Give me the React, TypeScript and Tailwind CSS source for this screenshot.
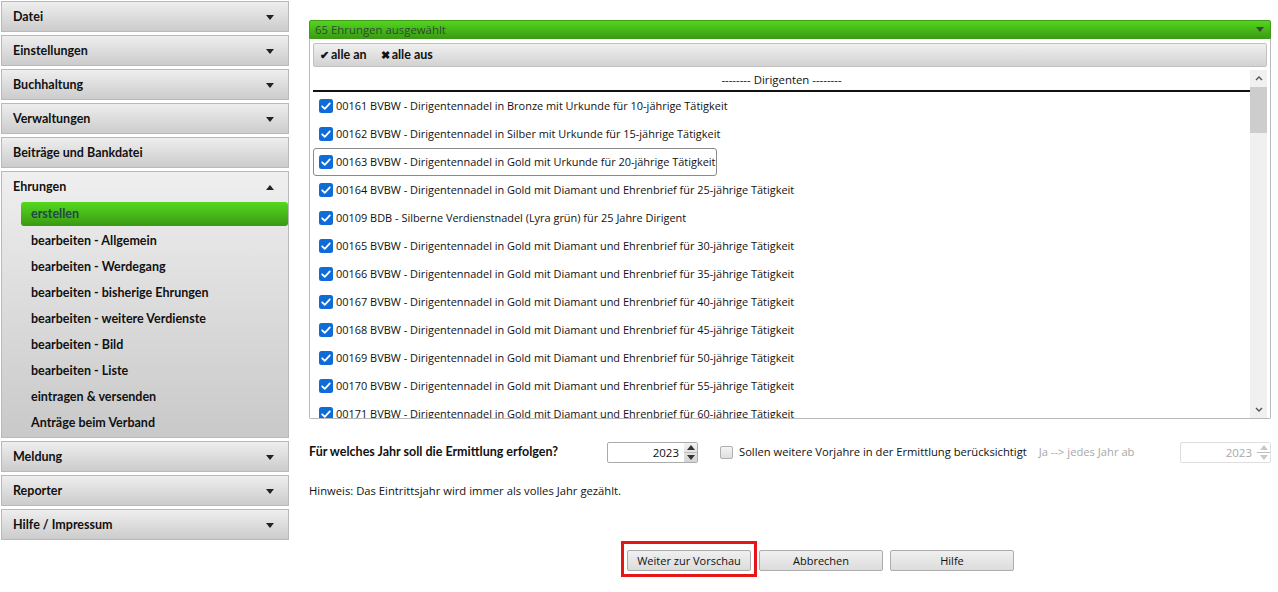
import React from 'react';

const sideFont = { fontFamily: 'Lato, "Noto Sans", sans-serif' };
const uiFont = { fontFamily: '"Open Sans", "Noto Sans", sans-serif' };

const Caret = ({ up = false, className = '' }: { up?: boolean; className?: string }) => (
  <svg viewBox="0 0 8 5" className={`w-[8px] h-[5px] ${className}`}>
    {up ? <path d="M0 5L4 0L8 5Z" fill="currentColor" /> : <path d="M0 0L8 0L4 5Z" fill="currentColor" />}
  </svg>
);

const BlueCheck = () => (
  <svg viewBox="0 0 14 14" className="w-[14px] h-[14px] shrink-0">
    <rect x="0" y="0" width="14" height="14" rx="2.5" fill="#0f6cd6" />
    <path d="M3.2 7.3L5.8 9.8L10.8 4.4" fill="none" stroke="#fff" strokeWidth="1.8" strokeLinecap="round" strokeLinejoin="round" />
  </svg>
);

const menu = ['Datei', 'Einstellungen', 'Buchhaltung', 'Verwaltungen', 'Beiträge und Bankdatei'];
const menuAfter = ['Meldung', 'Reporter', 'Hilfe / Impressum'];
const subItems = [
  'bearbeiten - Allgemein',
  'bearbeiten - Werdegang',
  'bearbeiten - bisherige Ehrungen',
  'bearbeiten - weitere Verdienste',
  'bearbeiten - Bild',
  'bearbeiten - Liste',
  'eintragen & versenden',
  'Anträge beim Verband',
];

const rows = [
  '00161 BVBW - Dirigentennadel in Bronze mit Urkunde für 10-jährige Tätigkeit',
  '00162 BVBW - Dirigentennadel in Silber mit Urkunde für 15-jährige Tätigkeit',
  '00163 BVBW - Dirigentennadel in Gold mit Urkunde für 20-jährige Tätigkeit',
  '00164 BVBW - Dirigentennadel in Gold mit Diamant und Ehrenbrief für 25-jährige Tätigkeit',
  '00109 BDB - Silberne Verdienstnadel (Lyra grün) für 25 Jahre Dirigent',
  '00165 BVBW - Dirigentennadel in Gold mit Diamant und Ehrenbrief für 30-jährige Tätigkeit',
  '00166 BVBW - Dirigentennadel in Gold mit Diamant und Ehrenbrief für 35-jährige Tätigkeit',
  '00167 BVBW - Dirigentennadel in Gold mit Diamant und Ehrenbrief für 40-jährige Tätigkeit',
  '00168 BVBW - Dirigentennadel in Gold mit Diamant und Ehrenbrief für 45-jährige Tätigkeit',
  '00169 BVBW - Dirigentennadel in Gold mit Diamant und Ehrenbrief für 50-jährige Tätigkeit',
  '00170 BVBW - Dirigentennadel in Gold mit Diamant und Ehrenbrief für 55-jährige Tätigkeit',
  '00171 BVBW - Dirigentennadel in Gold mit Diamant und Ehrenbrief für 60-jährige Tätigkeit',
];

const MenuHeader = ({ label, caret = true }: { label: string; caret?: boolean }) => (
  <div className="h-[31px] flex items-center justify-between pl-[11px] pr-[14px] pt-[1px] border border-[#b9b9b9] bg-gradient-to-b from-[#eeeeee] to-[#cccccc] text-[12.5px] font-bold text-[#111]">
    <span>{label}</span>
    {caret && <Caret className="text-[#222]" />}
  </div>
);

const Spinner = ({ disabled = false }: { disabled?: boolean }) => (
  <div className={`w-[91px] h-[21px] flex items-stretch border rounded-[2px] ${disabled ? 'border-[#dedede]' : 'border-[#ababab]'} bg-white`}>
    <div className={`flex-1 flex items-center justify-end pr-[5px] text-[11.5px] ${disabled ? 'text-[#a8a8a8]' : 'text-[#111]'}`}>2023</div>
    <div className={`w-[13px] flex flex-col ${disabled ? 'text-[#c8c8c8] bg-white' : 'text-[#333] bg-gradient-to-b from-[#f2f2f2] to-[#d4d4d4]'}`}>
      <div className="flex-1 flex items-center justify-center"><Caret up className="w-[7px] h-[4px]" /></div>
      <div className="h-px bg-[#bdbdbd]" />
      <div className="flex-1 flex items-center justify-center"><Caret className="w-[7px] h-[4px]" /></div>
    </div>
  </div>
);

const Btn = ({ label }: { label: string }) => (
  <button className="w-[124px] h-[21px] border border-[#acacac] rounded-[2px] bg-gradient-to-b from-[#f0f0f0] to-[#dcdcdc] text-[11px] text-[#111] leading-none">
    {label}
  </button>
);

export default function App() {
  return (
    <div className="w-[1278px] h-[592px] bg-white flex overflow-hidden" style={uiFont}>
      {/* Sidebar */}
      <div className="w-[288px] ml-[1px] mt-[1px] flex flex-col gap-[3px]" style={sideFont}>
        {menu.map((m) => (
          <MenuHeader key={m} label={m} caret={m !== 'Beiträge und Bankdatei'} />
        ))}
        <div className="border border-[#b9b9b9] bg-gradient-to-b from-[#efefef] to-[#c9c9c9] pb-[1px]">
          <div className="h-[30px] flex items-center justify-between pl-[11px] pr-[14px] pt-[1px] text-[12.5px] font-bold text-[#111]">
            <span>Ehrungen</span>
            <Caret up className="text-[#222]" />
          </div>
          <div className="ml-[19px] h-[24px] flex items-center pl-[10px] rounded-[3px] bg-gradient-to-b from-[#56d81f] to-[#3a9a13] text-[12.5px] font-bold text-[#1f4a45]">
            erstellen
          </div>
          <div className="flex flex-col pt-[2px]">
            {subItems.map((s) => (
              <div key={s} className="h-[26px] flex items-center pl-[29px] pt-[1px] text-[12.5px] font-bold text-[#111]">
                {s}
              </div>
            ))}
          </div>
        </div>
        {menuAfter.map((m) => (
          <MenuHeader key={m} label={m} />
        ))}
      </div>

      {/* Main */}
      <div className="ml-[20px] w-[962px] pt-[20px] flex flex-col">
        <div className="h-[19px] flex items-center justify-between pl-[5px] pr-[6px] border border-[#3f9a1a] rounded-t-[2px] bg-gradient-to-b from-[#52d61c] to-[#3b9d14] text-[11.4px] text-[#2d4a33]">
          <span>65 Ehrungen ausgewählt</span>
          <Caret className="text-[#3b4b3b]" />
        </div>
        <div className="h-[380px] border border-t-0 border-[#b9b9b9] rounded-b-[2px] px-[3px] pt-[4px] flex flex-col">
          <div className="h-[24px] flex items-center gap-[14px] px-[6px] border border-[#c0c0c0] rounded-[2px] bg-gradient-to-b from-[#f0f0f0] to-[#d2d2d2] text-[12.5px] font-bold text-[#111]" style={sideFont}>
            <span className="flex items-center gap-[2px]"><span className="text-[11px]">✔</span>alle an</span>
            <span className="flex items-center gap-[2px]"><span className="text-[11px]">✖</span>alle aus</span>
          </div>
          <div className="mt-[3px] flex-1 flex overflow-hidden">
            <div className="flex-1 flex flex-col overflow-hidden">
              <div className="h-[22px] shrink-0 flex items-center justify-center border-b-[2px] border-[#111] text-[11.4px] text-[#111]">
                -------- Dirigenten --------
              </div>
              {rows.map((r, i) => (
                <div key={r} className="h-[28px] shrink-0 flex items-center">
                  <div className={`h-[28px] flex items-center gap-[3px] pl-[5px] pr-[1px] rounded-[3px] border ${i === 2 ? 'border-[#8a8a8a]' : 'border-transparent'}`}>
                    <BlueCheck />
                    <span className="text-[10.95px] text-[#111] whitespace-nowrap">{r}</span>
                  </div>
                </div>
              ))}
            </div>
            <div className="w-[17px] bg-[#f0f0f0] flex flex-col">
              <div className="h-[17px] flex items-center justify-center text-[#555]">
                <svg viewBox="0 0 8 5" className="w-[8px] h-[5px]"><path d="M1 4L4 1L7 4" fill="none" stroke="currentColor" strokeWidth="1.4" /></svg>
              </div>
              <div className="h-[46px] bg-[#cdcdcd]" />
              <div className="flex-1" />
              <div className="h-[17px] flex items-center justify-center text-[#555]">
                <svg viewBox="0 0 8 5" className="w-[8px] h-[5px]"><path d="M1 1L4 4L7 1" fill="none" stroke="currentColor" strokeWidth="1.4" /></svg>
              </div>
            </div>
          </div>
        </div>

        <div className="mt-[23px] h-[21px] flex items-center">
          <span className="w-[298px] text-[12.5px] font-bold text-[#111]" style={sideFont}>Für welches Jahr soll die Ermittlung erfolgen?</span>
          <Spinner />
          <div className="ml-[22px] flex items-center gap-[6px]">
            <div className="w-[13px] h-[13px] border border-[#b0b0b0] rounded-[2px] bg-gradient-to-b from-[#f4f4f4] to-[#dedede]" />
            <span className="text-[11.2px] text-[#111]">Sollen weitere Vorjahre in der Ermittlung berücksichtigt</span>
          </div>
          <span className="ml-[12px] text-[11.2px] text-[#a8a8a8]">Ja --&gt; jedes Jahr ab</span>
          <div className="ml-auto"><Spinner disabled /></div>
        </div>

        <div className="mt-[20px] text-[11.25px] text-[#111]">Hinweis: Das Eintrittsjahr wird immer als volles Jahr gezählt.</div>

        <div className="mt-[41px] flex items-center pl-[312px]">
          <div className="border-[3px] border-[#e8141c] p-[3px]">
            <Btn label="Weiter zur Vorschau" />
          </div>
          <div className="ml-[2px]"><Btn label="Abbrechen" /></div>
          <div className="ml-[7px]"><Btn label="Hilfe" /></div>
        </div>
      </div>
    </div>
  );
}
